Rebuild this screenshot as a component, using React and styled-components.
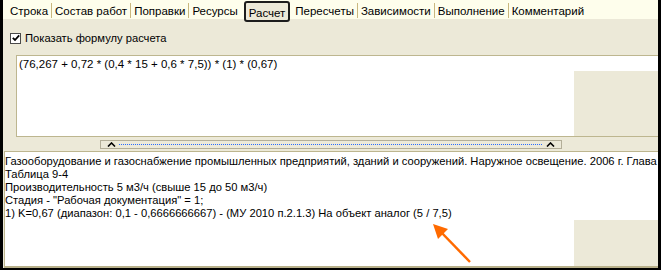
import React from "react"
import styled, { createGlobalStyle } from "styled-components"

const GlobalStyle = createGlobalStyle`
  html, body {
    margin: 0;
    padding: 0;
    background: #000000;
  }
  body {
    font-family: "Liberation Sans", Arial, sans-serif;
    font-size: 11.2px;
    color: #000000;
  }
`

const Frame = styled.div`
  position: relative;
  width: 655px;
  height: 268px;
  border-left: 3px solid #000;
  border-right: 3px solid #000;
  border-bottom: 2px solid #000;
  background: #ece9d8;
  display: flex;
  flex-direction: column;
  overflow: hidden;
`

const TabBar = styled.div`
  height: 19px;
  background: #fefeec;
  display: flex;
  align-items: flex-start;
  padding-left: 5px;
  font-size: 11.5px;
`

const Tab = styled.div`
  box-sizing: border-box;
  display: flex;
  align-items: center;
  white-space: nowrap;
  border-radius: 3px;
  position: relative;
  z-index: 1;
  height: ${(p) => (p.$active ? "21px" : "19px")};
  margin: ${(p) => (p.$active ? "1px 3px 0 4px" : "0")};
  padding: ${(p) => (p.$active ? "2px 3px 0" : "3px 2px 0")};
  background: ${(p) => (p.$active ? "#ece9d8" : "transparent")};
  border: ${(p) => (p.$active ? "2px solid #1c1c1c" : "none")};
`

const Sep = styled.div`
  width: 1px;
  height: 15px;
  margin: 3px 1px 0;
  background: #c9b77e;
`

const Upper = styled.div`
  display: flex;
  flex-direction: column;
`

const CheckRow = styled.label`
  display: flex;
  align-items: center;
  gap: 4px;
  height: 14px;
  margin: 12px 0 0 7px;
`

const CheckBox = styled.span`
  width: 9px;
  height: 9px;
  border: 1px solid #4a4a4a;
  background: #ffffff;
  display: flex;
  align-items: center;
  justify-content: center;
`

const Box = styled.div`
  height: ${(p) => p.$h}px;
  margin: ${(p) => p.$margin};
  border-top: 1px solid #bdb68f;
  border-bottom: ${(p) => (p.$bottom ? "1px solid #bdb68f" : "none")};
  border-left: 1px solid #bdb68f;
  background: #ffffff;
  display: flex;
  flex-direction: column;
`

const TextArea = styled.div`
  height: ${(p) => p.$h}px;
  box-sizing: border-box;
  padding: ${(p) => p.$pad};
  font-size: ${(p) => p.$size || "inherit"};
  line-height: 13px;
  white-space: pre;
  overflow: hidden;
`

const FillRow = styled.div`
  flex: 1;
  display: flex;
`

const WhiteFill = styled.div`
  flex: 1;
  background: #ffffff;
`

const Corner = styled.div`
  width: 84px;
  background: #ece9d8;
`

const SplitRow = styled.div`
  height: 9px;
  margin: 3px 0 0 97px;
  width: 462px;
  border: 1px solid #b3ae98;
  box-sizing: border-box;
  background: #ece9d8;
  display: flex;
  align-items: center;
  padding: 0 6px;
  gap: 3px;
`

const Dots = styled.div`
  flex: 1;
  height: 1px;
  background-image: linear-gradient(to right, #2a6bff 50%, transparent 50%);
  background-size: 2px 1px;
`

const BottomEdge = styled.div`
  height: 2px;
  margin-left: 1px;
  background: #b8b08a;
`

const Arrow = styled.svg`
  position: absolute;
  left: 420px;
  top: 218px;
  pointer-events: none;
`

const tabs = [
  "Строка",
  "Состав работ",
  "Поправки",
  "Ресурсы",
  "Расчет",
  "Пересчеты",
  "Зависимости",
  "Выполнение",
  "Комментарий",
]

const lines = [
  "Газооборудование и газоснабжение промышленных предприятий, зданий и сооружений. Наружное освещение. 2006 г. Глава 3",
  "Таблица 9-4",
  "Производительность 5 м3/ч (свыше 15 до 50 м3/ч)",
  "Стадия - \"Рабочая документация\" = 1;",
  "1) K=0,67 (диапазон: 0,1 - 0,6666666667) - (МУ 2010 п.2.1.3) На объект аналог (5 / 7,5)",
]

function Caret() {
  return (
    <svg width="9" height="5" viewBox="0 0 9 5">
      <path d="M1 4.5 L4.5 1 L8 4.5" fill="none" stroke="#000" strokeWidth="1.6" />
    </svg>
  )
}

export default function App() {
  const active = "Расчет"
  return (
    <>
      <GlobalStyle />
      <Frame>
        <TabBar>
          {tabs.map((t, i) => {
            const next = tabs[i + 1]
            const showSep =
              i < tabs.length - 1 && t !== active && next !== active
            return (
              <React.Fragment key={t}>
                <Tab $active={t === active}>{t}</Tab>
                {showSep && <Sep />}
              </React.Fragment>
            )
          })}
        </TabBar>

        <Upper>
          <CheckRow>
            <CheckBox>
              <svg width="8" height="8" viewBox="0 0 8 8">
                <path d="M0.8 3.8 L3 6 L7.2 1.4" fill="none" stroke="#000" strokeWidth="1.8" />
              </svg>
            </CheckBox>
            Показать формулу расчета
          </CheckRow>

          <Box $h={80} $margin="10px 0 0 13px" $bottom>
            <TextArea $h={15} $pad="2px 2px 0" $size="11.5px">
              (76,267 + 0,72 * (0,4 * 15 + 0,6 * 7,5)) * (1) * (0,67)
            </TextArea>
            <FillRow>
              <WhiteFill />
              <Corner />
            </FillRow>
          </Box>

          <SplitRow>
            <Caret />
            <Dots />
            <Caret />
          </SplitRow>
        </Upper>

        <Box $h={114} $margin="2px 0 0 1px">
          <TextArea $h={68} $pad="3px 0 0 0">{lines.join("\n")}</TextArea>
          <FillRow>
            <WhiteFill />
            <Corner />
          </FillRow>
        </Box>
        <BottomEdge />

        <Arrow width="60" height="50" viewBox="0 0 60 50">
          <line x1="47" y1="44" x2="17" y2="13" stroke="#ff6a00" strokeWidth="2.5" />
          <path d="M10 6 L25 11 L15 21 Z" fill="#ff6a00" />
        </Arrow>
      </Frame>
    </>
  )
}
